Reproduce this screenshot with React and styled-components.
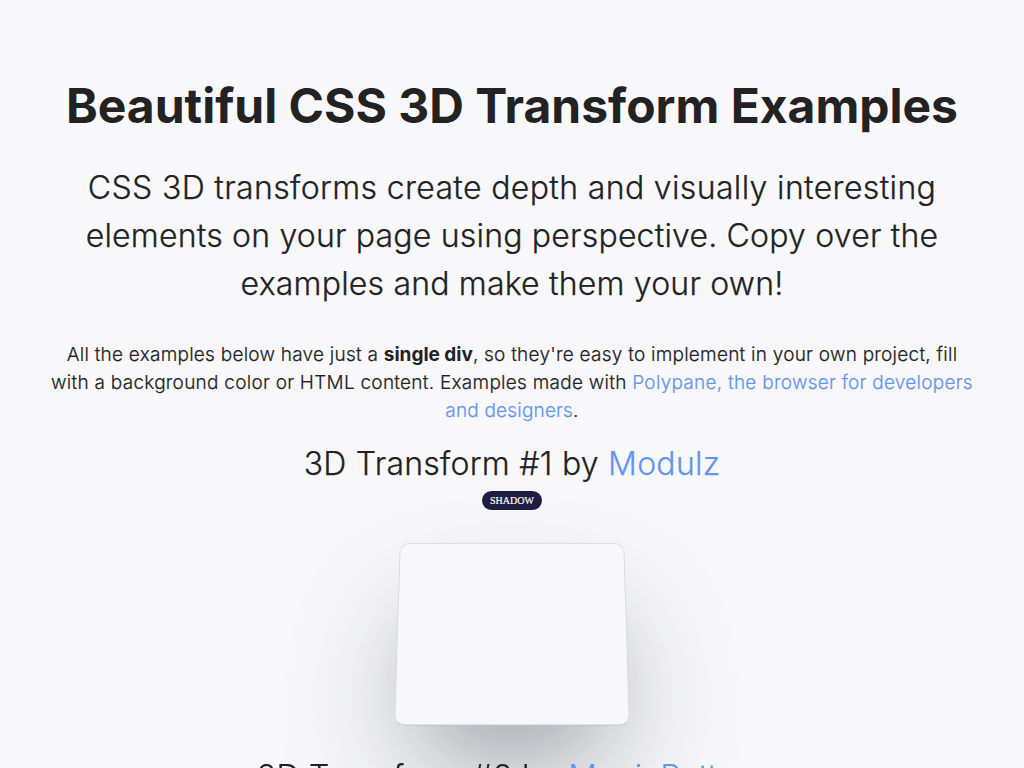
import React from "react";
import styled, { createGlobalStyle } from "styled-components";

const GlobalStyle = createGlobalStyle`
  *, *::before, *::after { box-sizing: border-box; }
  body {
    margin: 0;
    height: 768px;
    overflow: hidden;
    background: #f8f8fb;
    color: #222222;
    font-family: Inter, "Liberation Sans", sans-serif;
  }
`;

const Page = styled.main`
  display: flex;
  flex-direction: column;
  align-items: center;
  padding: 76px 48px 0;
  text-align: center;
`;

const Title = styled.h1`
  margin: 0;
  font-size: 48px;
  line-height: 60px;
  font-weight: 700;
  white-space: nowrap;
`;

const Lead = styled.p`
  margin: 28px 0 0;
  font-size: 32px;
  line-height: 48px;
  font-weight: 300;
  -webkit-text-stroke: 0.25px currentColor;
`;

const Note = styled.p`
  margin: 33px 0 0;
  font-size: 19px;
  line-height: 28px;
  font-weight: 300;
  -webkit-text-stroke: 0.2px currentColor;
`;

const Line = styled.span`
  display: block;
  white-space: nowrap;
  letter-spacing: ${(p) => p.$spacing || 0}px;
`;

const Strong = styled.strong`
  font-weight: 700;
  letter-spacing: 0;
  -webkit-text-stroke: 0;
`;

const Link = styled.a`
  color: #6495ed;
  text-decoration: none;
  -webkit-text-stroke-color: #6495ed;
`;

const Heading = styled.h2`
  position: relative;
  margin: ${(p) => p.$top}px 0 0;
  font-size: 32px;
  line-height: 48px;
  font-weight: 300;
  letter-spacing: 0.25px;
  white-space: nowrap;
  -webkit-text-stroke: 0.25px currentColor;
`;

const Tag = styled.span`
  display: block;
  margin-top: 3px;
  width: 60px;
  height: 19px;
  border-radius: 10px;
  background: #1e1c40;
  color: #fff;
  font: 10px/19px "Liberation Serif", serif;
  -webkit-text-stroke: 0.2px #fff;
`;

const Card = styled.div`
  margin-top: 26px;
  width: 230px;
  height: 192px;
  border: 1px solid;
  border-color: rgb(213, 220, 226) rgb(213, 220, 226) rgb(184, 194, 204);
  border-radius: 10px;
  background: #f8f8fb;
  transform: perspective(1200px) rotateX(18deg);
  box-shadow: rgba(22, 31, 39, 0.42) 0 60px 123px -25px,
    rgba(19, 26, 32, 0.08) 0 35px 75px -35px;
`;

export default function App() {
  return (
    <>
      <GlobalStyle />
      <Page>
        <Title>Beautiful CSS 3D Transform Examples</Title>
        <Lead>
          <Line $spacing={0.35}>
            CSS 3D transforms create depth and visually interesting{" "}
          </Line>
          <Line $spacing={0.19}>
            elements on your page using perspective. Copy over the{" "}
          </Line>
          <Line $spacing={0.19}>examples and make them your own!</Line>
        </Lead>
        <Note>
          <Line $spacing={0.24}>
            All the examples below have just a <Strong>single div</Strong>, so
            they're easy to implement in your own project, fill{" "}
          </Line>
          <Line $spacing={0.26}>
            with a background color or HTML content. Examples made with{" "}
            <Link>Polypane, the browser for developers </Link>
          </Line>
          <Line $spacing={0.18}>
            <Link>and designers</Link>.
          </Line>
        </Note>
        <Heading $top={15}>
          3D Transform #1 by <Link>Modulz</Link>
        </Heading>
        <Tag>SHADOW</Tag>
        <Card />
        <Heading $top={25}>
          3D Transform #2 by <Link>MagicPattern</Link>
        </Heading>
      </Page>
    </>
  );
}
